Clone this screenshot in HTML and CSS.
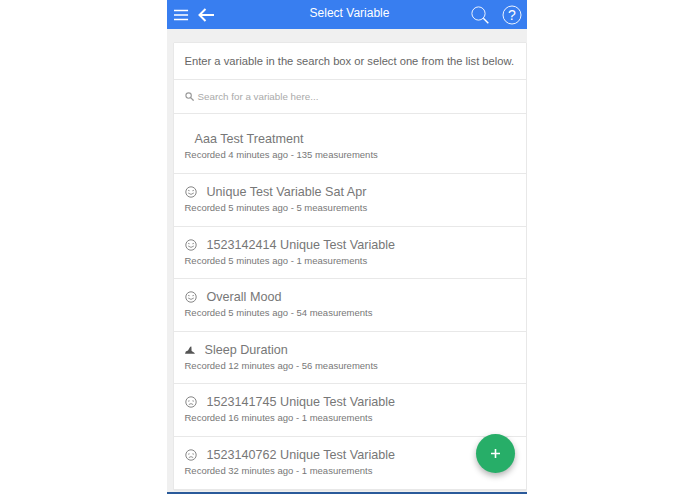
FILE: index.html
```html
<!DOCTYPE html>
<html lang="en">
<head>
<meta charset="utf-8">
<title>Select Variable</title>
<link rel="stylesheet" href="styles.css">
</head>
<body>
<svg class="defs" width="0" height="0" aria-hidden="true">
  <symbol id="happy" viewBox="0 0 12 12"><circle cx="6" cy="6" r="5.2" fill="none" stroke="currentColor" stroke-width=".9"/><path d="M3 4.8q.8-.8 1.6 0M7.4 4.8q.8-.8 1.6 0M3.2 7q2.8 2.8 5.6 0" fill="none" stroke="currentColor" stroke-width=".8"/></symbol>
  <symbol id="sad" viewBox="0 0 12 12"><circle cx="6" cy="6" r="5.2" fill="none" stroke="currentColor" stroke-width=".9"/><path d="M3 4.8q.8.8 1.6 0M7.4 4.8q.8.8 1.6 0M3.8 8.6q2.2-2 4.4 0" fill="none" stroke="currentColor" stroke-width=".8"/></symbol>
</svg>
<div class="app">
  <header class="bar">
    <div class="bar-left">
      <svg class="ic-menu" viewBox="0 0 16 12"><path d="M0 1.2h15M0 6h15M0 10.8h15" stroke="#fff" stroke-width="1.7" fill="none"/></svg>
      <svg class="ic-back" viewBox="0 0 16 14"><path d="M7.5 1L1.5 7l6 6M1.5 7H16" stroke="#fff" stroke-width="2" fill="none"/></svg>
    </div>
    <h1 class="title">Select Variable</h1>
    <div class="bar-right">
      <svg class="ic-search" viewBox="0 0 18 18"><circle cx="7.5" cy="7.5" r="6.6" fill="none" stroke="#fff" stroke-width=".9"/><path d="M12.3 12.3l5 5" stroke="#fff" stroke-width="1.4"/></svg>
      <svg class="ic-help" viewBox="0 0 20 20"><circle cx="10" cy="10" r="9" fill="none" stroke="#fff" stroke-width=".9"/><text x="10" y="14.8" text-anchor="middle" class="help-q">?</text></svg>
    </div>
  </header>
  <main class="content">
    <section class="card">
      <div class="intro">Enter a variable in the search box or select one from the list below.</div>
      <div class="search">
        <svg class="ic-mini" viewBox="0 0 9 9"><circle cx="3.6" cy="3.6" r="2.7" fill="none" stroke="#999" stroke-width="1.1"/><path d="M5.6 5.6l3 3" stroke="#999" stroke-width="1.3"/></svg>
        <span>Search for a variable here...</span>
      </div>
      <div class="item first">
        <div class="name no-icon">Aaa Test Treatment</div>
        <div class="meta">Recorded 4 minutes ago - 135 measurements</div>
      </div>
      <div class="item">
        <div class="name"><svg class="face"><use href="#happy"/></svg>Unique Test Variable Sat Apr</div>
        <div class="meta">Recorded 5 minutes ago - 5 measurements</div>
      </div>
      <div class="item">
        <div class="name"><svg class="face"><use href="#happy"/></svg>1523142414 Unique Test Variable</div>
        <div class="meta">Recorded 5 minutes ago - 1 measurements</div>
      </div>
      <div class="item">
        <div class="name"><svg class="face"><use href="#happy"/></svg>Overall Mood</div>
        <div class="meta">Recorded 5 minutes ago - 54 measurements</div>
      </div>
      <div class="item">
        <div class="name"><svg class="sleep" viewBox="0 0 10 8"><path d="M0 7.8L.8 5.4 3 4.4 5.2.8 6.4.6 6.6 5 9 6.6 10 7.8z" fill="#555"/></svg>Sleep Duration</div>
        <div class="meta">Recorded 12 minutes ago - 56 measurements</div>
      </div>
      <div class="item">
        <div class="name"><svg class="face"><use href="#sad"/></svg>1523141745 Unique Test Variable</div>
        <div class="meta">Recorded 16 minutes ago - 1 measurements</div>
      </div>
      <div class="item">
        <div class="name"><svg class="face"><use href="#sad"/></svg>1523140762 Unique Test Variable</div>
        <div class="meta">Recorded 32 minutes ago - 1 measurements</div>
      </div>
    </section>
    <button class="fab" aria-label="Add"><svg viewBox="0 0 9 9"><path d="M4.5 0v9M0 4.5h9" stroke="#fff" stroke-width="1.6"/></svg></button>
  </main>
  <div class="bottom-line"></div>
</div>
</body>
</html>
```
FILE: styles.css
```css
html, body { margin: 0; padding: 0; height: 100%; background: #fff; overflow: hidden; }
body { font-family: "Liberation Sans", Arial, sans-serif; display: flex; justify-content: center; }
.defs { position: absolute; }
.app { width: 360px; height: 494px; margin-right: 2px; display: flex; flex-direction: column; background: #f0f0f0; position: relative; overflow: hidden; }
.bar { height: 29px; flex: none; background: #387ef0; display: flex; align-items: center; position: relative; color: #fff; }
.bar-left { display: flex; align-items: center; padding-left: 7px; gap: 9px; }
.ic-menu { width: 15px; height: 12px; display: block; }
.ic-back { width: 16px; height: 14px; display: block; }
.title { position: absolute; left: 6px; right: 0; top: 0; margin: 0; text-align: center; font-size: 12px; line-height: 27px; font-weight: 400; }
.bar-right { margin-left: auto; display: flex; align-items: center; gap: 13px; padding-right: 5px; position: relative; }
.ic-search { width: 18px; height: 18px; display: block; }
.ic-help { width: 20px; height: 20px; display: block; }
.help-q { font: 14px "Liberation Sans", Arial, sans-serif; fill: #fff; }
.content { flex: 1; padding: 14px 1px 0 7px; position: relative; min-height: 0; }
.card { background: #fff; box-shadow: 0 0 1px rgba(0,0,0,.2); }
.intro { height: 36px; line-height: 36px; padding-left: 11px; font-size: 11.2px; color: #666; border-bottom: 1px solid #e8e8e8; white-space: nowrap; }
.search { height: 33px; display: flex; align-items: center; padding-left: 11px; gap: 4px; font-size: 9.8px; color: #aaa; border-bottom: 1px solid #e8e8e8; }
.ic-mini { width: 9px; height: 9px; display: block; }
.item { height: 51.6px; padding-left: 11px; border-bottom: 1px solid #e8e8e8; }
.item.first { height: 59px; }
.name { display: flex; align-items: center; font-size: 12.6px; line-height: 16px; color: #777; padding-top: 10px; white-space: nowrap; }
.first .name { padding-top: 17px; }
.no-icon { padding-left: 10px; }
.face { width: 12px; height: 12px; margin-right: 10px; color: #777; flex: none; }
.sleep { width: 10px; height: 8px; margin-right: 10px; flex: none; }
.meta { font-size: 9.5px; line-height: 12px; margin-top: 2px; color: #777; white-space: nowrap; }
.fab { position: absolute; left: 309px; top: 404.5px; width: 39px; height: 39px; border-radius: 50%; border: 0; padding: 0; background: #27ae68; box-shadow: 0 3px 6px rgba(0,0,0,.3); display: flex; align-items: center; justify-content: center; }
.fab svg { width: 9px; height: 9px; display: block; }
.bottom-line { position: absolute; left: 0; right: 0; bottom: 0; height: 2px; background: #2a5a9a; }
```
